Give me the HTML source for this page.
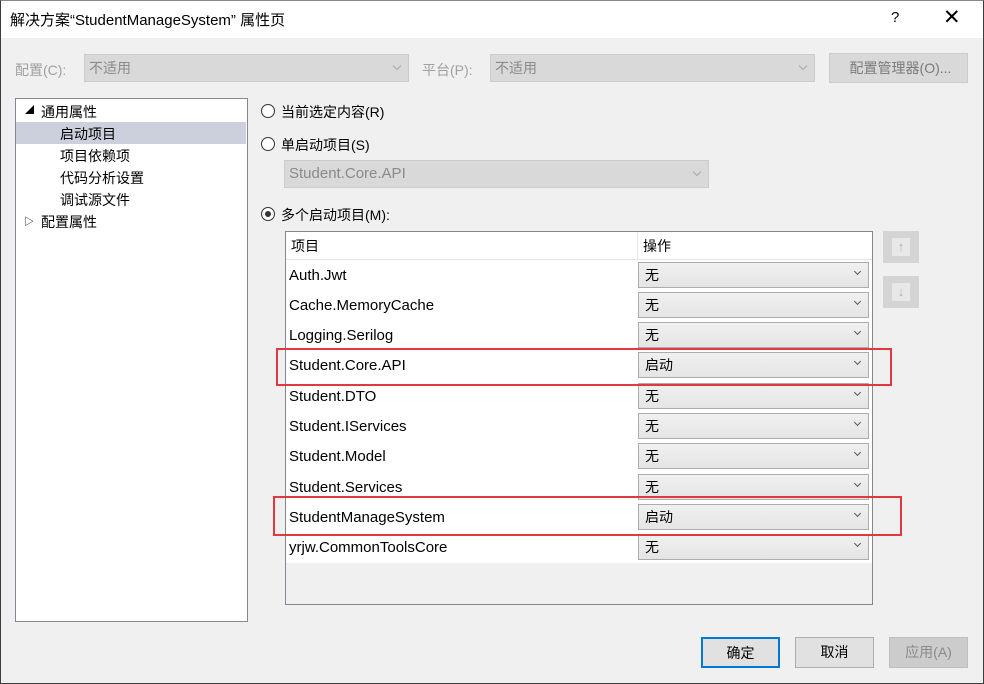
<!DOCTYPE html>
<html><head><meta charset="utf-8"><style>
*{margin:0;padding:0;box-sizing:border-box}
body{width:984px;height:684px;background:#f0f0f0;font-family:"Liberation Sans","Noto Sans CJK SC",sans-serif;font-size:14px;color:#000;position:relative;overflow:hidden}
.a{position:absolute}
.frame{left:0;top:0;width:984px;height:684px;border:1px solid #3c3c3c;border-top-color:#888}
.title{left:1px;top:1px;width:982px;height:37px;background:#fff}
.dis{color:#a0a0a0}
.combo{background:#d9d9d9;border:1px solid #ccc;color:#8a8a8a;padding-left:4px;line-height:26px}
.chev{position:absolute;right:8px;top:8px;width:6px;height:6px;border-right:1px solid #aaa;border-bottom:1px solid #aaa;transform:rotate(45deg)}
.radio{width:14px;height:14px;border:1px solid #333;border-radius:50%;background:#fff}
.dd{position:absolute;left:638px;width:231px;height:26px;border:1px solid #acacac;background:linear-gradient(#f0f0f0,#e5e5e5);padding-left:6px;line-height:24px}
.dd .chev{border-color:#555;top:6px;width:5px;height:5px}
.row{position:absolute;left:289px;line-height:20px}
.btn{height:31px;border:1px solid #adadad;background:#e1e1e1;text-align:center;line-height:29px}
.red{border:2px solid #e0393e}
</style></head><body>
<div class="a title"></div>
<div class="a" style="left:10px;top:9px;font-size:15px">解决方案“StudentManageSystem” 属性页</div>
<div class="a" style="left:891px;top:9px;font-size:15px">?</div>
<div class="a" style="left:943px;top:5px;font-size:21px;font-weight:300">✕</div>
<div class="a frame"></div>

<div class="a dis" style="left:15px;top:60px">配置(C):</div>
<div class="a combo" style="left:84px;top:54px;width:325px;height:28px">不适用<span class="chev"></span></div>
<div class="a dis" style="left:422px;top:60px">平台(P):</div>
<div class="a combo" style="left:490px;top:54px;width:325px;height:28px">不适用<span class="chev"></span></div>
<div class="a combo" style="left:829px;top:53px;width:139px;height:30px;text-align:center;line-height:28px;color:#7a7a7a">配置管理器(O)...</div>

<div class="a" style="left:15px;top:98px;width:233px;height:524px;background:#fff;border:1px solid #828790"></div>
<div class="a" style="left:16px;top:122px;width:230px;height:22px;background:#ccd0dc"></div>
<div class="a" style="left:25px;top:103px;font-size:9px">◢</div>
<div class="a" style="left:41px;top:102px">通用属性</div>
<div class="a" style="left:60px;top:124px">启动项目</div>
<div class="a" style="left:60px;top:146px">项目依赖项</div>
<div class="a" style="left:60px;top:168px">代码分析设置</div>
<div class="a" style="left:60px;top:190px">调试源文件</div>
<div class="a" style="left:24px;top:213px;font-size:10px">▷</div>
<div class="a" style="left:41px;top:212px">配置属性</div>

<div class="a radio" style="left:261px;top:104px"></div>
<div class="a" style="left:281px;top:102px">当前选定内容(R)</div>
<div class="a radio" style="left:261px;top:137px"></div>
<div class="a" style="left:281px;top:135px">单启动项目(S)</div>
<div class="a combo" style="left:284px;top:160px;width:425px;height:28px;font-size:15px">Student.Core.API<span class="chev"></span></div>
<div class="a radio" style="left:261px;top:207px"></div>
<div class="a" style="left:265px;top:211px;width:6px;height:6px;border-radius:50%;background:#333"></div>
<div class="a" style="left:281px;top:205px">多个启动项目(M):</div>

<div class="a" style="left:285px;top:231px;width:588px;height:374px;border:1px solid #828790;background:#f0f0f0"></div>
<div class="a" style="left:286px;top:232px;width:586px;height:28px;background:#fff;border-bottom:1px solid #e5e5e5"></div>
<div class="a" style="left:637px;top:232px;width:1px;height:28px;background:#e5e5e5"></div>
<div class="a" style="left:291px;top:236px">项目</div>
<div class="a" style="left:643px;top:236px">操作</div>
<div class="a" style="left:286px;top:260px;width:586px;height:303px;background:#fff"></div>

<div class="row" style="top:266px;font-size:15px">Auth.Jwt</div><div class="dd" style="top:262px">无<span class="chev"></span></div>
<div class="row" style="top:296px;font-size:15px">Cache.MemoryCache</div><div class="dd" style="top:292px">无<span class="chev"></span></div>
<div class="row" style="top:326px;font-size:15px">Logging.Serilog</div><div class="dd" style="top:322px">无<span class="chev"></span></div>
<div class="row" style="top:356px;font-size:15px">Student.Core.API</div><div class="dd" style="top:352px">启动<span class="chev"></span></div>
<div class="row" style="top:387px;font-size:15px">Student.DTO</div><div class="dd" style="top:383px">无<span class="chev"></span></div>
<div class="row" style="top:417px;font-size:15px">Student.IServices</div><div class="dd" style="top:413px">无<span class="chev"></span></div>
<div class="row" style="top:447px;font-size:15px">Student.Model</div><div class="dd" style="top:443px">无<span class="chev"></span></div>
<div class="row" style="top:478px;font-size:15px">Student.Services</div><div class="dd" style="top:474px">无<span class="chev"></span></div>
<div class="row" style="top:508px;font-size:15px">StudentManageSystem</div><div class="dd" style="top:504px">启动<span class="chev"></span></div>
<div class="row" style="top:538px;font-size:15px">yrjw.CommonToolsCore</div><div class="dd" style="top:534px">无<span class="chev"></span></div>

<div class="a red" style="left:276px;top:348px;width:616px;height:38px"></div>
<div class="a red" style="left:273px;top:496px;width:629px;height:40px"></div>

<div class="a" style="left:883px;top:231px;width:36px;height:32px;background:#d4d4d4;text-align:center;padding-top:7px"><div style="display:inline-block;width:18px;height:18px;background:#e8e8e8;color:#b0b0b0;font-size:13px;line-height:18px;font-weight:bold">↑</div></div>
<div class="a" style="left:883px;top:276px;width:36px;height:32px;background:#d4d4d4;text-align:center;padding-top:7px"><div style="display:inline-block;width:18px;height:18px;background:#e8e8e8;color:#b0b0b0;font-size:13px;line-height:18px;font-weight:bold">↓</div></div>

<div class="a btn" style="left:701px;top:637px;width:79px;border:2px solid #0078d7">确定</div>
<div class="a btn" style="left:795px;top:637px;width:79px">取消</div>
<div class="a btn" style="left:889px;top:637px;width:79px;background:#ccc;border-color:#bfbfbf;color:#8a8a8a">应用(A)</div>
</body></html>
